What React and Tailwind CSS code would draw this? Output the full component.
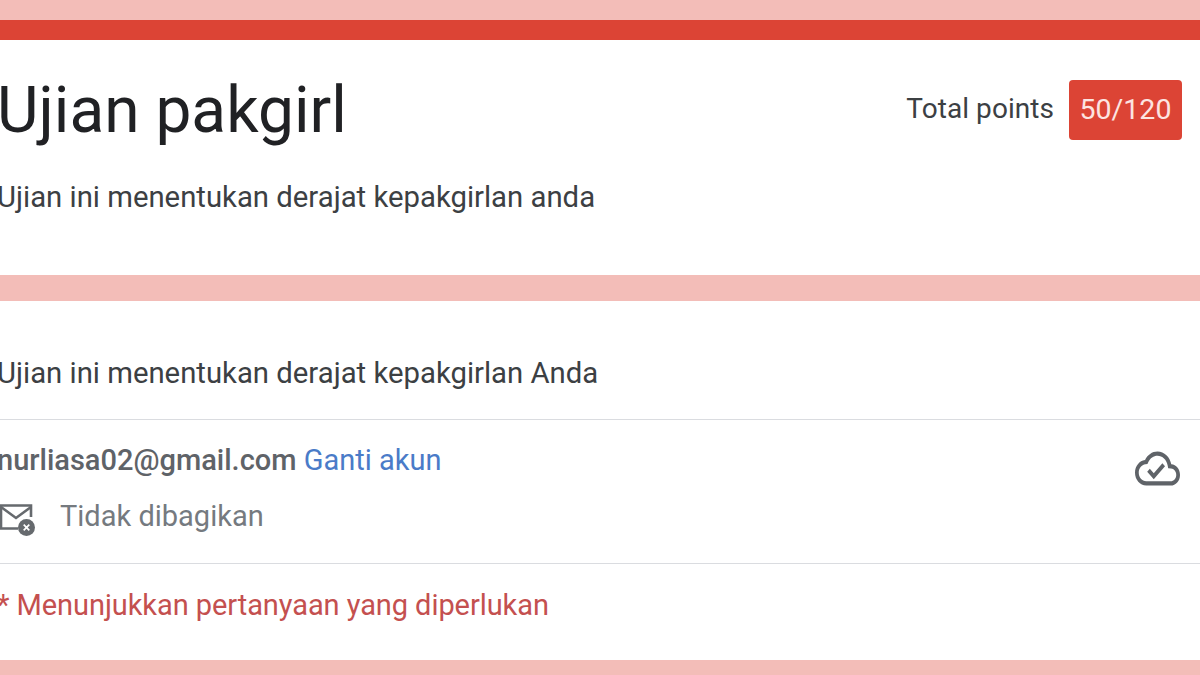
function MailOffIcon() {
  return (
    <svg width="36" height="34" viewBox="0 0 36 34" fill="none" className="shrink-0 translate-y-[4px]">
      <path d="M18 25.5H1V2.5h30V14" stroke="#666a6e" strokeWidth="2.6" />
      <path d="M1 4 16 15 31 4" stroke="#666a6e" strokeWidth="2.6" />
      <circle cx="26.5" cy="24.5" r="8.5" fill="#666a6e" />
      <path d="M23.7 21.7l5.6 5.6M29.3 21.7l-5.6 5.6" stroke="#fff" strokeWidth="1.7" />
    </svg>
  );
}

function CloudDoneIcon() {
  return (
    <svg width="45" height="51" viewBox="0 0 24 24" preserveAspectRatio="none" fill="#5f6368" className="mt-[3px] shrink-0">
      <path d="M19.35 10.04C18.67 6.59 15.64 4 12 4 9.11 4 6.6 5.64 5.35 8.04 2.34 8.36 0 10.91 0 14c0 3.31 2.69 6 6 6h13c2.76 0 5-2.24 5-5 0-2.64-2.05-4.78-4.65-4.96zM19 18H6c-2.21 0-4-1.79-4-4 0-2.05 1.53-3.76 3.56-3.97l1.07-.11.5-.95C8.08 7.14 9.94 6 12 6c2.62 0 4.88 1.86 5.39 4.43l.3 1.5 1.53.11c1.56.1 2.78 1.41 2.78 2.96 0 1.65-1.35 3-3 3zm-9-3.82l-2.09-2.09L6.5 13.5 10 17l6.01-6.01-1.41-1.41z" />
    </svg>
  );
}

export default function App() {
  return (
    <div className="w-[1200px] h-[675px] overflow-hidden bg-[#f3bdb8] font-['Roboto',sans-serif]">
      <div className="h-5" />
      <div className="h-5 bg-[#dc4435]" />

      {/* HEADER CARD */}
      <div className="h-[235px] bg-white pt-[36px]">
        <div className="flex items-start justify-between pr-[18px]">
          <h1 className="-ml-[3px] text-[64px] leading-[70px] text-[#202124]">Ujian pakgirl</h1>
          <div className="-mt-[3px] flex items-center gap-[15px] pt-[7px]">
            <span className="-translate-y-px text-[28px] tracking-[0.05px] text-[#3c4043]">Total points</span>
            <span className="flex h-[60px] w-[113px] items-center justify-center rounded-[4px] bg-[#dc4435] text-[28.5px] text-[#fde4e1]">
              50/120
            </span>
          </div>
        </div>
        <p className="-ml-[3px] mt-[31px] text-[29.3px] leading-[40px] text-[#3c4043]">
          Ujian ini menentukan derajat kepakgirlan anda
        </p>
      </div>

      <div className="h-[26px]" />

      {/* INFO CARD */}
      <div className="h-[359px] bg-white">
        <div className="h-[119px] border-b border-[#dadce0] pt-[52px]">
          <p className="-ml-[3px] text-[29.3px] leading-[40px] text-[#3c4043]">
            Ujian ini menentukan derajat kepakgirlan Anda
          </p>
        </div>
        <div className="flex h-[144px] items-start justify-between border-b border-[#dadce0] pr-[20px] pt-[20px]">
          <div>
            <p className="-ml-[3px] text-[29px] leading-[40px]">
              <span className="font-medium text-[#5f6368]">nurliasa02@gmail.com</span>{" "}
              <span className="text-[#4a7bc8]">Ganti akun</span>
            </p>
            <div className="mt-[16px] flex items-center gap-[24px]">
              <MailOffIcon />
              <span className="text-[29px] leading-[40px] text-[#757a7f]">Tidak dibagikan</span>
            </div>
          </div>
          <CloudDoneIcon />
        </div>
        <p className="-ml-[3px] pt-[21px] text-[29px] leading-[40px] tracking-[-0.07px] text-[#c4504f]">
          * Menunjukkan pertanyaan yang diperlukan
        </p>
      </div>
    </div>
  );
}
